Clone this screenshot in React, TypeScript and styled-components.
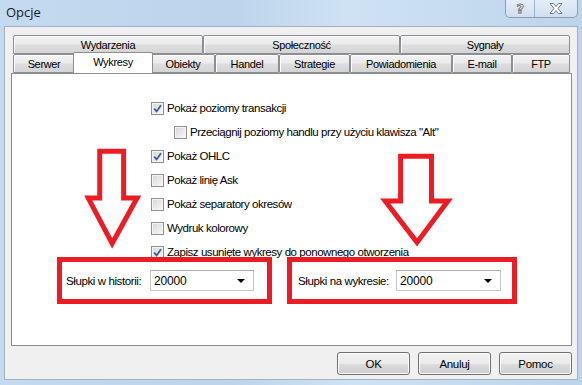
import { styled, createGlobalStyle } from 'styled-components';

const GlobalStyle = createGlobalStyle`
  html, body {
    margin: 0;
    padding: 0;
    background: #bed6ee;
    overflow: hidden;
  }
  * {
    box-sizing: border-box;
  }
`;

const TOP_TABS = [
  { label: 'Wydarzenia', width: 190 },
  { label: 'Społeczność', width: 197 },
  { label: 'Sygnały', width: 170 },
];

const BOTTOM_TABS = [
  { label: 'Serwer', width: 62 },
  { label: 'Wykresy', width: 76, active: true },
  { label: 'Obiekty', width: 64 },
  { label: 'Handel', width: 64 },
  { label: 'Strategie', width: 71 },
  { label: 'Powiadomienia', width: 102 },
  { label: 'E-mail', width: 60 },
  { label: 'FTP', width: 58 },
];

const OPTIONS = [
  { label: 'Pokaż poziomy transakcji', checked: true },
  { label: 'Przeciągnij poziomy handlu przy użyciu klawisza "Alt"', checked: false, indent: true },
  { label: 'Pokaż OHLC', checked: true },
  { label: 'Pokaż linię Ask', checked: false },
  { label: 'Pokaż separatory okresów', checked: false },
  { label: 'Wydruk kolorowy', checked: false },
  { label: 'Zapisz usunięte wykresy do ponownego otworzenia', checked: true },
];

const App = () => {
  return (
    <>
      <GlobalStyle />
      <Window>
        <TitleBar>
          <Title>Opcje</Title>
          <CaptionButtons>
            <CaptionButton $w={29}>
              <HelpGlyph>?</HelpGlyph>
            </CaptionButton>
            <CaptionButton $w={44} $last>
              <svg width="14" height="11" viewBox="0 0 14 11">
                <polygon
                  points="1,0.5 4.5,0.5 7,3.5 9.5,0.5 13,0.5 9,5.5 13,10.5 9.5,10.5 7,7.5 4.5,10.5 1,10.5 5,5.5"
                  fill="#fff"
                  stroke="#6d7784"
                  strokeWidth="1"
                />
              </svg>
            </CaptionButton>
          </CaptionButtons>
        </TitleBar>
        <Client>
          <TabRow>
            {TOP_TABS.map((t) => (
              <Tab key={t.label} $w={t.width}>
                {t.label}
              </Tab>
            ))}
          </TabRow>
          <TabRow>
            {BOTTOM_TABS.map((t) => (
              <Tab key={t.label} $w={t.width} $active={t.active}>
                {t.label}
              </Tab>
            ))}
          </TabRow>
          <Panel>
            <CheckList>
              {OPTIONS.map((o) => (
                <CheckRow key={o.label} $indent={o.indent}>
                  <CheckBox>
                    {o.checked && (
                      <svg width="11" height="11" viewBox="0 0 11 11">
                        <path
                          d="M2.2 5.6 L4.6 8.4 L9 2.2"
                          fill="none"
                          stroke="#3d5a96"
                          strokeWidth="1.8"
                        />
                      </svg>
                    )}
                  </CheckBox>
                  <CheckLabel>{o.label}</CheckLabel>
                </CheckRow>
              ))}
            </CheckList>
            <BoxRow>
              <RedBox $w={215} $pad={4}>
                <FieldLabel $w={84}>Słupki w historii:</FieldLabel>
                <Combo $w={104}>
                  <span>20000</span>
                  <DropArrow />
                </Combo>
              </RedBox>
              <RedBox $w={230} $pad={6}>
                <FieldLabel $w={98}>Słupki na wykresie:</FieldLabel>
                <Combo $w={105}>
                  <span>20000</span>
                  <DropArrow />
                </Combo>
              </RedBox>
            </BoxRow>
            <Annotations viewBox="12 73 560 272">
              <polygon
                points="99.5,150.5 123.5,150.5 123.5,197.5 137,197.5 112,243 88,197.5 99.5,197.5"
                fill="#fff"
                stroke="#ed1c24"
                strokeWidth="5"
              />
              <polygon
                points="401.5,155.5 432.5,155.5 432.5,200.5 449,200.5 418,242 386,200.5 401.5,200.5"
                fill="#fff"
                stroke="#ed1c24"
                strokeWidth="5"
              />
            </Annotations>
          </Panel>
          <ButtonBar>
            <DialogButton>OK</DialogButton>
            <DialogButton>Anuluj</DialogButton>
            <DialogButton>Pomoc</DialogButton>
          </ButtonBar>
        </Client>
      </Window>
    </>
  );
};

export default App;

const Window = styled.div`
  width: 582px;
  height: 385px;
  display: flex;
  flex-direction: column;
  background: linear-gradient(90deg, #c3daf0 0%, #bcd4ec 40%, #cfe2f4 60%, #bcd4ec 100%);
  font-family: 'Liberation Sans', Arial, sans-serif;
  font-size: 11px;
  letter-spacing: -0.35px;
  color: #000;
`;

const TitleBar = styled.div`
  height: 26px;
  display: flex;
  justify-content: space-between;
  align-items: flex-start;
`;

const Title = styled.div`
  padding: 3px 0 0 6px;
  font-family: 'Open Sans', 'Liberation Sans', sans-serif;
  font-size: 13px;
  letter-spacing: 0;
  color: #1b1b1b;
`;

const CaptionButtons = styled.div`
  display: flex;
  margin-right: 4px;
  height: 18px;
  border: 1px solid #8d9db1;
  border-top: none;
  border-radius: 0 0 5px 5px;
  overflow: hidden;
  background: linear-gradient(#e4eef8, #cfdff0);
`;

const CaptionButton = styled.div<{ $w: number; $last?: boolean }>`
  width: ${(p) => p.$w - 1}px;
  display: flex;
  align-items: center;
  justify-content: center;
  border-left: ${(p) => (p.$last ? '1px solid #9fb1c6' : 'none')};
`;

const HelpGlyph = styled.span`
  font-family: 'DejaVu Sans', sans-serif;
  font-weight: bold;
  font-size: 13px;
  color: #fff;
  -webkit-text-stroke: 1px #6d7784;
  line-height: 1;
`;

const Client = styled.div`
  margin: 0 4px;
  height: 354px;
  background: #f0f0f0;
  border: 1px solid #a3b0be;
  padding: 8px 5px 0 6px;
  display: flex;
  flex-direction: column;
`;

const TabRow = styled.div`
  display: flex;
  padding-left: 2px;
`;

const Tab = styled.div<{ $w: number; $active?: boolean }>`
  position: relative;
  width: ${(p) => (p.$active ? p.$w + 4 : p.$w)}px;
  height: ${(p) => (p.$active ? 21 : 19)}px;
  margin: ${(p) => (p.$active ? '-2px -2px -1px -2px' : '0')};
  z-index: ${(p) => (p.$active ? 2 : 0)};
  display: flex;
  align-items: center;
  justify-content: center;
  padding-bottom: ${(p) => (p.$active ? 3 : 0)}px;
  border: 1px solid #8c8e94;
  border-bottom: ${(p) => (p.$active ? 'none' : '1px solid #8c8e94')};
  border-radius: 2px 2px 0 0;
  background: ${(p) =>
    p.$active ? '#fff' : 'linear-gradient(#f3f3f3, #ebebeb 45%, #dddddd 55%, #d4d4d4)'};
  box-shadow: ${(p) => (p.$active ? 'none' : 'inset 1px 1px 0 #fcfcfc')};
  color: #000;
  white-space: nowrap;
`;

const Panel = styled.div`
  position: relative;
  width: 561px;
  height: 273px;
  background: #fff;
  border: 1px solid #898c95;
`;

const CheckList = styled.div`
  padding: 22px 0 0 139px;
  display: flex;
  flex-direction: column;
`;

const CheckRow = styled.div<{ $indent?: boolean }>`
  height: 24px;
  display: flex;
  align-items: center;
  gap: 3px;
  padding-left: ${(p) => (p.$indent ? 23 : 0)}px;
`;

const CheckBox = styled.div`
  width: 13px;
  height: 13px;
  border: 1px solid #8f8f8f;
  background: linear-gradient(135deg, #d6d6d6, #f8f8f8);
  box-shadow: inset 0 0 0 1px #f4f4f4;
  display: flex;
  align-items: center;
  justify-content: center;
`;

const CheckLabel = styled.span`
  font-size: 11.5px;
  letter-spacing: -0.45px;
  white-space: nowrap;
`;

const BoxRow = styled.div`
  display: flex;
  gap: 15px;
  margin-top: -7px;
  padding-left: 45px;
`;

const RedBox = styled.div<{ $w: number; $pad: number }>`
  position: relative;
  width: ${(p) => p.$w}px;
  height: 47px;
  border: 5px solid #ed1c24;
  display: flex;
  align-items: center;
  padding-left: ${(p) => p.$pad}px;
`;

const FieldLabel = styled.span<{ $w: number }>`
  width: ${(p) => p.$w}px;
  font-size: 11.5px;
  letter-spacing: -0.4px;
  white-space: nowrap;
`;

const Combo = styled.div<{ $w: number }>`
  width: ${(p) => p.$w}px;
  height: 21px;
  border: 1px solid #c5c7cc;
  border-top-color: #abadb3;
  background: #fff;
  display: flex;
  align-items: center;
  justify-content: space-between;
  padding: 0 8px 0 3px;
  font-size: 12px;
  letter-spacing: -0.2px;
`;

const DropArrow = styled.span`
  width: 0;
  height: 0;
  border-left: 4px solid transparent;
  border-right: 4px solid transparent;
  border-top: 4px solid #000;
`;

const Annotations = styled.svg`
  position: absolute;
  inset: 0;
  width: 100%;
  height: 100%;
  pointer-events: none;
`;

const ButtonBar = styled.div`
  display: flex;
  justify-content: flex-end;
  gap: 8px;
  margin-top: 6px;
`;

const DialogButton = styled.button`
  width: 73px;
  height: 23px;
  border: 1px solid #707070;
  border-radius: 3px;
  background: linear-gradient(#f2f2f2, #ebebeb 50%, #dddddd 50%, #cfcfcf);
  box-shadow: inset 0 0 0 1px #fcfcfc;
  font-family: 'Liberation Sans', Arial, sans-serif;
  font-size: 11.5px;
  letter-spacing: -0.3px;
  color: #000;
  padding: 0;
`;
